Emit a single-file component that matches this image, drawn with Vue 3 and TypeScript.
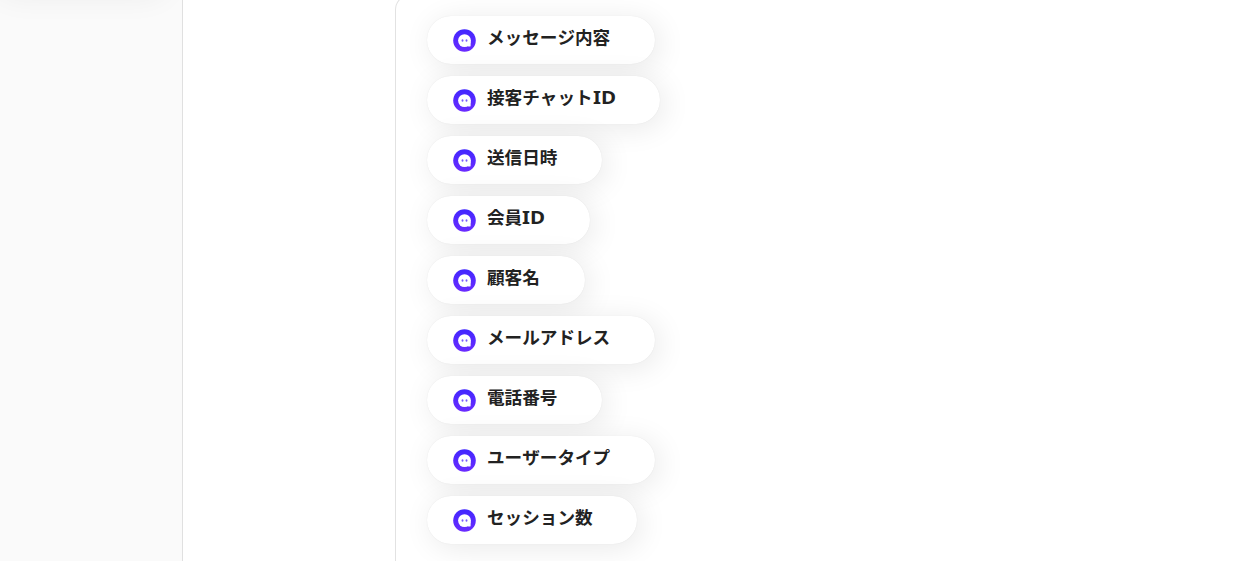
<script setup lang="ts">
interface Item {
  text: string
  latin?: string
  width: number
}

const items: Item[] = [
  { text: 'メッセージ内容', width: 228.4 },
  { text: '接客チャット', latin: 'ID', width: 233.4 },
  { text: '送信日時', width: 175.4 },
  { text: '会員', latin: 'ID', width: 163.2 },
  { text: '顧客名', width: 158.2 },
  { text: 'メールアドレス', width: 228.4 },
  { text: '電話番号', width: 175.4 },
  { text: 'ユーザータイプ', width: 228.4 },
  { text: 'セッション数', width: 210.4 },
]
</script>

<template>
  <div class="page">
    <aside class="sidebar"><div class="upper-card"></div></aside>
    <main class="content">
      <section class="panel">
        <div v-for="item in items" :key="item.text" class="pill" :style="{ width: item.width + 'px' }">
          <svg class="icon" viewBox="0 0 23 23">
            <defs>
              <linearGradient id="ring" x1="0" y1="0" x2="0" y2="1">
                <stop offset="0" stop-color="#4127ff" />
                <stop offset="1" stop-color="#6b2bff" />
              </linearGradient>
            </defs>
            <circle cx="11.5" cy="11.5" r="11.3" fill="url(#ring)" />
            <circle cx="11.5" cy="11.6" r="6.4" fill="#fff" />
            <path d="M17.6 12v4.7q0 .9-.9.9h-1.4l-1.5-1.2Z" fill="#fff" />
            <ellipse cx="9.5" cy="11.5" rx="0.95" ry="1.3" fill="#7a5aff" />
            <ellipse cx="13.5" cy="11.5" rx="0.95" ry="1.3" fill="#7a5aff" />
          </svg>
          <span class="label">{{ item.text }}<span v-if="item.latin" class="latin">{{ item.latin }}</span></span>
        </div>
      </section>
    </main>
  </div>
</template>

<style>
body {
  margin: 0;
  overflow: hidden;
}
</style>

<style scoped>
.page {
  display: flex;
  height: 561px;
  overflow: hidden;
  background: #fff;
}
.sidebar {
  box-sizing: border-box;
  width: 183px;
  flex: none;
  overflow: hidden;
  background: #fafafa;
  border-right: 1px solid #e0e0e0;
}
.upper-card {
  width: 176px;
  height: 60px;
  margin-left: -10px;
  margin-top: -66px;
  border-radius: 24px;
  box-shadow: 4px 4px 30px rgba(0, 0, 0, 0.055);
}
.content {
  flex: 1;
  padding-left: 212px;
}
.panel {
  box-sizing: border-box;
  height: 620px;
  margin-top: -6px;
  padding: 21px 0 0 31px;
  border: 1px solid #e2e2e2;
  border-right: 0;
  border-radius: 16px 0 0 16px;
  display: flex;
  flex-direction: column;
  align-items: flex-start;
  gap: 12px;
}
.pill {
  box-sizing: border-box;
  height: 48px;
  flex: none;
  display: flex;
  align-items: center;
  padding-left: 26px;
  border-radius: 24px;
  background: #fff;
  box-shadow: 4px 4px 30px rgba(0, 0, 0, 0.09), 0 0 1px rgba(0, 0, 0, 0.1);
}
.icon {
  width: 23px;
  height: 23px;
  flex: none;
  margin-top: 1px;
}
.label {
  margin-left: 11px;
  margin-top: -6px;
  height: 24px;
  color: #222;
  font: 700 17.6px/24px "Noto Sans CJK JP", sans-serif;
  font-kerning: none;
  white-space: nowrap;
}
.latin {
  display: inline-block;
  font-family: "Noto Sans", sans-serif;
  font-size: 18px;
  line-height: 20px;
  transform: scaleX(1.14);
  transform-origin: left;
}
</style>
